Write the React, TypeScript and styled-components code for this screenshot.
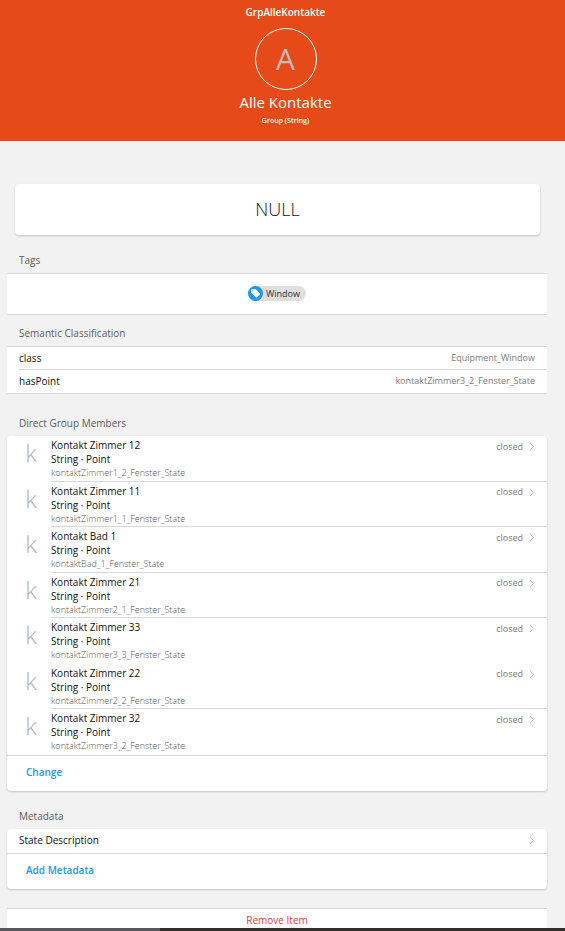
import React from "react";
import styled, { createGlobalStyle } from "styled-components";

const colors = {
  brand: "#e64a19",
  page: "#f2f2f2",
  line: "#d8d8d8",
  text: "#111111",
  muted: "#7c7c7c",
  heading: "#5c5c5c",
  link: "#2196f3",
  danger: "#e53935",
};

const GlobalStyle = createGlobalStyle`
  *, *::before, *::after { box-sizing: border-box; }
  body {
    margin: 0;
    background: ${colors.page};
    color: ${colors.text};
    font-family: "Open Sans", "Noto Sans", sans-serif;
    font-size: 10px;
    line-height: 14px;
  }
  h1, h2, h3, p, ul, dl, dd, dt { margin: 0; padding: 0; font-weight: 400; }
  ul { list-style: none; }
  button { font: inherit; border: 0; background: none; padding: 0; cursor: pointer; }
  a { color: inherit; text-decoration: none; }
`;

const Page = styled.div`
  display: flex;
  flex-direction: column;
`;

const Hero = styled.header`
  display: flex;
  flex-direction: column;
  align-items: center;
  padding: 5px 0 12px 6px;
  background: ${colors.brand};
  color: #fff;
`;

const ItemName = styled.p`
  font-weight: 600;
`;

const Avatar = styled.div`
  display: flex;
  align-items: center;
  justify-content: center;
  width: 62px;
  height: 62px;
  margin: 9px 0 2px;
  border: 1px solid #fff;
  border-radius: 50%;
  color: #c4bcb8;
  font-size: 30px;
  line-height: 60px;
`;

const ItemLabel = styled.h1`
  font-size: 15px;
  line-height: 21px;
`;

const ItemType = styled.p`
  font-size: 7px;
  font-weight: 600;
  line-height: 16px;
`;

const Content = styled.main`
  display: flex;
  flex-direction: column;
  padding: 43px 18px 0 7px;
`;

const StateCard = styled.section`
  margin: 0 7px 0 8px;
  padding: 13px 14px 14px;
  border-radius: 4px;
  background: #fff;
  box-shadow: 0 1px 2px rgba(0, 0, 0, 0.2);
  font-size: 18px;
  font-weight: 300;
  line-height: 24px;
  text-align: center;
`;

const Section = styled.section<{ $gap: number }>`
  display: flex;
  flex-direction: column;
  margin-top: ${(p) => p.$gap}px;
`;

const Heading = styled.h2`
  padding: 0 12px 6px;
  color: ${colors.heading};
  font-size: 10px;
`;

const Card = styled.div`
  overflow: hidden;
  border-radius: 4px;
  background: #fff;
  box-shadow: 0 1px 2px rgba(0, 0, 0, 0.2);
`;

const TagList = styled.ul`
  display: flex;
  justify-content: center;
  padding: 12px;
  border: solid ${colors.line};
  border-width: 1px 0;
  background: #fff;
`;

const Chip = styled.li`
  display: flex;
  align-items: center;
  gap: 3px;
  height: 15px;
  margin-bottom: 1px;
  padding-right: 6px;
  border-radius: 8px;
  background: #dfdfdf;
  color: #333;
  font-size: 9px;
`;

const ChipMedia = styled.span`
  display: flex;
  align-items: center;
  justify-content: center;
  width: 15px;
  height: 15px;
  border-radius: 50%;
  background: ${colors.link};
`;

const Properties = styled.dl`
  border: solid ${colors.line};
  border-width: 1px 0;
  background: #fff;
`;

const Property = styled.div`
  display: flex;
  align-items: center;
  justify-content: space-between;
  min-height: 22px;
  margin-left: 12px;
  padding: 0 12px 1px 0;

  & + & {
    min-height: 24px;
    padding-bottom: 2px;
    border-top: 1px solid ${colors.line};
  }
`;

const PropertyValue = styled.dd`
  color: ${colors.muted};
  font-size: 9px;
`;

const MemberList = styled.ul`
  display: grid;
  grid-auto-rows: 1fr;
  min-height: 319px;
`;

const MemberLink = styled.a`
  display: flex;
  height: 100%;
  padding-left: 12px;
`;

const Initial = styled.span`
  width: 32px;
  padding: 5px 8px 0 0;
  color: #b4b4b4;
  font-size: 24px;
  font-weight: 300;
  line-height: 24px;
  text-align: center;
`;

const MemberBody = styled.div<{ $divided: boolean }>`
  display: flex;
  flex: 1;
  justify-content: space-between;
  padding: 2px 12px 0 0;
  border-bottom: 1px solid ${(p) => (p.$divided ? colors.line : "transparent")};
`;

const MemberName = styled.h3`
  font-size: 10px;
  font-weight: 500;
`;

const MemberId = styled.p`
  color: #555;
  font-size: 9px;
  font-weight: 300;
  line-height: 14px;
`;

const MemberState = styled.div`
  display: flex;
  align-items: center;
  gap: 6px;
  height: 17px;
  color: ${colors.muted};
  font-size: 9px;
`;

const Actions = styled.div`
  display: flex;
  padding: 9px 19px 12px;
  border-top: 1px solid ${colors.line};
`;

const ActionButton = styled.button`
  color: ${colors.link};
  font-weight: 600;
`;

const MetadataLink = styled.a`
  display: flex;
  align-items: center;
  justify-content: space-between;
  min-height: 24px;
  padding: 0 12px 2px;
`;

const RemoveButton = styled.button`
  width: 100%;
  height: 20px;
  padding-top: 2px;
  margin-top: 19px;
  border-top: 1px solid ${colors.line};
  background: #fff;
  color: ${colors.danger};
`;

const BottomEdge = styled.footer`
  display: flex;
  height: 3px;
  background: #332d2d;
`;

const BottomSegment = styled.div`
  width: 160px;
  background: #58575a;
`;

const Chevron = () => (
  <svg width="6" height="9" viewBox="0 0 6 9" aria-hidden="true">
    <path d="M1 1L4.5 4.5L1 8" fill="none" stroke="#bcbcbc" strokeWidth="1" />
  </svg>
);

const TagIcon = () => (
  <svg width="11" height="11" viewBox="0 0 11 11" aria-hidden="true">
    <path
      d="M1.6 1.2H5.1Q5.5 1.2 5.8 1.5L10 5.6Q10.4 6 10 6.4L6.9 9.5Q6.5 9.9 6.1 9.5L1.7 5.3Q1.3 5 1.3 4.6V1.6Q1.3 1.2 1.6 1.2ZM2.9 2.2A.6 .6 0 1 0 2.9 3.4A.6 .6 0 1 0 2.9 2.2Z"
      fill="#fff"
      fillRule="evenodd"
    />
  </svg>
);

const members = [
  { name: "Kontakt Zimmer 12", id: "kontaktZimmer1_2_Fenster_State", divided: true },
  { name: "Kontakt Zimmer 11", id: "kontaktZimmer1_1_Fenster_State", divided: true },
  { name: "Kontakt Bad 1", id: "kontaktBad_1_Fenster_State", divided: true },
  { name: "Kontakt Zimmer 21", id: "kontaktZimmer2_1_Fenster_State", divided: true },
  { name: "Kontakt Zimmer 33", id: "kontaktZimmer3_3_Fenster_State", divided: false },
  { name: "Kontakt Zimmer 22", id: "kontaktZimmer2_2_Fenster_State", divided: true },
  { name: "Kontakt Zimmer 32", id: "kontaktZimmer3_2_Fenster_State", divided: false },
];

const properties = [
  { name: "class", value: "Equipment_Window" },
  { name: "hasPoint", value: "kontaktZimmer3_2_Fenster_State" },
];

export default function App() {
  return (
    <Page>
      <GlobalStyle />
      <Hero>
        <ItemName>GrpAlleKontakte</ItemName>
        <Avatar>A</Avatar>
        <ItemLabel>Alle Kontakte</ItemLabel>
        <ItemType>Group (String)</ItemType>
      </Hero>
      <Content>
        <StateCard>NULL</StateCard>

        <Section $gap={18}>
          <Heading>Tags</Heading>
          <TagList>
            <Chip>
              <ChipMedia>
                <TagIcon />
              </ChipMedia>
              Window
            </Chip>
          </TagList>
        </Section>

        <Section $gap={11}>
          <Heading>Semantic Classification</Heading>
          <Properties>
            {properties.map((p) => (
              <Property key={p.name}>
                <dt>{p.name}</dt>
                <PropertyValue>{p.value}</PropertyValue>
              </Property>
            ))}
          </Properties>
        </Section>

        <Section $gap={22}>
          <Heading>Direct Group Members</Heading>
          <Card>
            <MemberList>
              {members.map((m) => (
                <li key={m.id}>
                  <MemberLink href={`#${m.id}`}>
                    <Initial>k</Initial>
                    <MemberBody $divided={m.divided}>
                      <div>
                        <MemberName>{m.name}</MemberName>
                        <p>String · Point</p>
                        <MemberId>{m.id}</MemberId>
                      </div>
                      <MemberState>
                        closed
                        <Chevron />
                      </MemberState>
                    </MemberBody>
                  </MemberLink>
                </li>
              ))}
            </MemberList>
            <Actions>
              <ActionButton type="button">Change</ActionButton>
            </Actions>
          </Card>
        </Section>

        <Section $gap={18}>
          <Heading>Metadata</Heading>
          <Card>
            <MetadataLink href="#state-description">
              State Description
              <Chevron />
            </MetadataLink>
            <Actions>
              <ActionButton type="button">Add Metadata</ActionButton>
            </Actions>
          </Card>
        </Section>

        <RemoveButton type="button">Remove Item</RemoveButton>
      </Content>
      <BottomEdge>
        <BottomSegment />
      </BottomEdge>
    </Page>
  );
}
